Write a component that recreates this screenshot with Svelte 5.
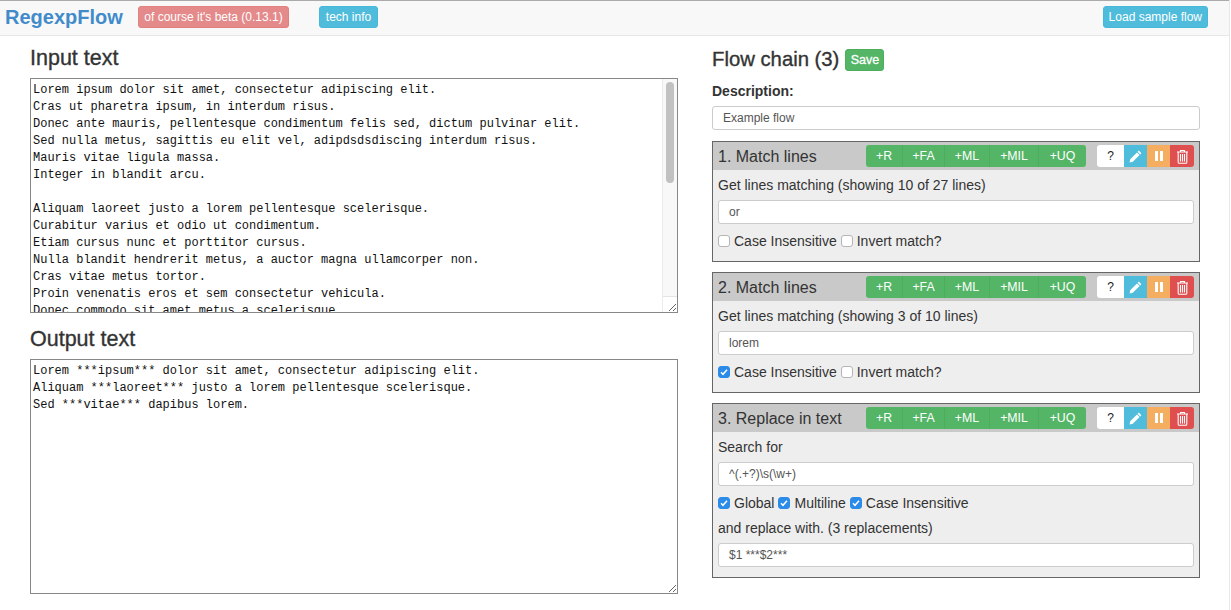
<script>
  const input = `Lorem ipsum dolor sit amet, consectetur adipiscing elit.
Cras ut pharetra ipsum, in interdum risus.
Donec ante mauris, pellentesque condimentum felis sed, dictum pulvinar elit.
Sed nulla metus, sagittis eu elit vel, adipdsdsdiscing interdum risus.
Mauris vitae ligula massa.
Integer in blandit arcu.

Aliquam laoreet justo a lorem pellentesque scelerisque.
Curabitur varius et odio ut condimentum.
Etiam cursus nunc et porttitor cursus.
Nulla blandit hendrerit metus, a auctor magna ullamcorper non.
Cras vitae metus tortor.
Proin venenatis eros et sem consectetur vehicula.
Donec commodo sit amet metus a scelerisque.
Sed vitae dapibus lorem.
Nam at tellus in sem rhoncus porta.
Vivamus euismod nisl eget sem ornare.
Morbi feugiat dolor at nisi dictum.
Quisque at nulla vel lorem aliquet.
Aenean sit amet sapien et metus.
Fusce a lorem sed massa tempus.
Ut vitae odio in nunc cursus.
Duis at sem non lorem dictum.
Mauris sit amet nibh ut ipsum.
Curabitur non metus at sem.
Nullam at nisi vitae lorem.
Donec at arcu sit amet nulla.`;
  const output = `Lorem ***ipsum*** dolor sit amet, consectetur adipiscing elit.
Aliquam ***laoreet*** justo a lorem pellentesque scelerisque.
Sed ***vitae*** dapibus lorem.`;
  const adds = ['+R', '+FA', '+ML', '+MIL', '+UQ'];
</script>

{#snippet head(title)}
  <div class="filter-head">
    <span class="filter-title">{title}</span>
    <div class="btn-group adds">
      {#each adds as a}<button class="add">{a}</button>{/each}
    </div>
    <div class="btn-group tools">
      <button class="tool help">?</button>
      <button class="tool edit" aria-label="Edit">
        <svg width="13" height="13" viewBox="0 0 13 13"><path d="M9.800 .6l2.600 2.600-1.200 1.200-2.600-2.600zM8 2.400l2.600 2.600-6.800 6.800L.6 12.400l.6-3.200z" fill="#fff"/></svg>
      </button>
      <button class="tool pause" aria-label="Pause">
        <svg width="8" height="10" viewBox="0 0 8 10"><path d="M0 0h3v10H0zM5 0h3v10H5z" fill="#fff"/></svg>
      </button>
      <button class="tool del" aria-label="Delete">
        <svg width="13" height="15" viewBox="0 0 13 15"><path d="M1 3h11M4.500 3V1.500h4V3M2.200 3v10.200q0 1.100 1 1.100h6.600q1 0 1-1.100V3M4.500 5v7.500M6.500 5v7.500M8.500 5v7.500" fill="none" stroke="#fff" stroke-width="1.100"/></svg>
      </button>
    </div>
  </div>
{/snippet}

{#snippet check(label, on)}
  <label class="check"><span class="box" class:on>{#if on}<svg width="10" height="10" viewBox="0 0 10 10"><path d="M2 5.300l2 2 4-4.600" fill="none" stroke="#fff" stroke-width="1.500"/></svg>{/if}</span>{label}</label>
{/snippet}

<div class="frame">
  <nav class="nav">
    <span class="brand">RegexpFlow</span>
    <button class="btn beta">of course it's beta (0.13.1)</button>
    <button class="btn info tech">tech info</button>
    <button class="btn info load">Load sample flow</button>
  </nav>

  <main class="page">
    <section class="left">
      <h3 class="first">Input text</h3>
      <div class="ta-wrap">
        <textarea class="ta" readonly spellcheck="false" value={input}></textarea>
        <div class="sbar"><div class="track"><div class="thumb"></div></div></div>
      </div>
      <h3 class="second">Output text</h3>
      <textarea class="ta" readonly spellcheck="false" value={output}></textarea>
    </section>

    <section class="right">
      <div class="chain-head">
        <h3 class="chain-title">Flow chain (3)</h3>
        <button class="save">Save</button>
      </div>
      <div class="desc-label">Description:</div>
      <input class="field desc" value="Example flow" />

      <div class="filter">
        {@render head('1. Match lines')}
        <div class="body">
          <div class="lbl">Get lines matching (showing 10 of 27 lines)</div>
          <input class="field" value="or" />
          <div class="checks">{@render check('Case Insensitive', false)}{@render check('Invert match?', false)}</div>
        </div>
      </div>

      <div class="filter">
        {@render head('2. Match lines')}
        <div class="body">
          <div class="lbl">Get lines matching (showing 3 of 10 lines)</div>
          <input class="field" value="lorem" />
          <div class="checks">{@render check('Case Insensitive', true)}{@render check('Invert match?', false)}</div>
        </div>
      </div>

      <div class="filter">
        {@render head('3. Replace in text')}
        <div class="body">
          <div class="lbl">Search for</div>
          <input class="field" value={'^(.+?)\\s(\\w+)'} />
          <div class="checks">{@render check('Global', true)}{@render check('Multiline', true)}{@render check('Case Insensitive', true)}</div>
          <div class="lbl second-lbl">and replace with. (3 replacements)</div>
          <input class="field" value="$1 ***$2***" />
        </div>
      </div>
    </section>
  </main>
</div>

<style>
  :global(body) {
    margin: 0;
    background: #fff;
    color: #333;
    font-family: "Liberation Sans", Arial, sans-serif;
    font-size: 14px;
    overflow: hidden;
  }
  .frame {
    width: 1230px;
    height: 610px;
    box-sizing: border-box;
    border-right: 1px solid #e7e7e7;
  }
  .nav {
    display: flex;
    align-items: center;
    height: 36px;
    box-sizing: border-box;
    border-top: 1px solid #aaa;
    border-bottom: 1px solid #e7e7e7;
    background: #f8f8f8;
    padding: 0 21px 2px 5px;
  }
  .brand {
    font-size: 20px;
    font-weight: 700;
    color: #428bca;
    width: 133px;
  }
  .btn {
    height: 22px;
    padding: 0 5px;
    font: 12px "Liberation Sans", Arial, sans-serif;
    color: #fff;
    border: 1px solid;
    border-radius: 3px;
  }
  .beta { background: #e58a8a; border-color: #e28080; width: 151px; }
  .info { background: #4fbcdb; border-color: #46b8da; }
  .tech { margin-left: 30px; width: 59px; }
  .load { margin-left: auto; }

  .page {
    display: flex;
    padding-left: 30px;
    gap: 34px;
  }
  .left { width: 648px; }
  .right { width: 488px; }
  h3 {
    font-size: 20.3px;
    font-weight: 400;
    line-height: 24px;
    margin: 0;
    color: #333;
    -webkit-text-stroke: 0.35px #333;
  }
  .chain-title { margin-bottom: 2px; }
  .first, .second { font-size: 21.5px; }
  .first { margin-top: 10px; margin-bottom: 8px; }
  .second { margin-top: 14px; margin-bottom: 8px; }
  .ta-wrap { position: relative; }
  .ta {
    display: block;
    width: 648px;
    height: 235px;
    box-sizing: border-box;
    border: 1px solid #888;
    padding: 3px 2px 2px;
    margin: 0;
    resize: both;
    overflow-y: auto;
    font: 12px/17px "Liberation Mono", "Courier New", monospace;
    color: #111;
    outline: none;
    white-space: pre-wrap;
  }
  .sbar {
    position: absolute;
    top: 1px;
    right: 1px;
    bottom: 1px;
    width: 15px;
    box-sizing: border-box;
    border-left: 1px solid #ececec;
    pointer-events: none;
  }
  .track {
    height: 218px;
    box-sizing: border-box;
    padding: 3px 3px 0 3px;
    background: #f8f8f8;
    border-bottom: 1px solid #e4e4e4;
  }
  .thumb {
    width: 8px;
    height: 101px;
    background: #c1c1c1;
    border-radius: 4px;
  }
  .chain-head {
    display: flex;
    align-items: center;
    gap: 6px;
    margin-top: 13px;
    height: 22px;
  }
  .save {
    height: 22px;
    width: 39px;
    padding: 0;
    font: 12.500px "Liberation Sans", Arial, sans-serif;
    -webkit-text-stroke: 0.3px #fff;
    color: #fff;
    background: #54b567;
    border: 1px solid #4cae5c;
    border-radius: 3px;
  }
  .desc-label {
    font-weight: 700;
    font-size: 14px;
    line-height: 20px;
    margin-top: 10px;
    margin-bottom: 5px;
  }
  .field {
    display: block;
    width: 100%;
    height: 24px;
    box-sizing: border-box;
    border: 1px solid #ccc;
    border-radius: 3px;
    padding: 0 10px;
    margin: 0;
    font: 12px "Liberation Sans", Arial, sans-serif;
    color: #555;
    background: #fff;
    outline: none;
  }
  .filter {
    margin-top: 10px;
    border: 1px solid #666;
    background: #eee;
    padding-bottom: 10px;
  }
  .desc + .filter { margin-top: 11px; }
  .filter-head {
    display: flex;
    align-items: center;
    height: 28px;
    background: #c9c9c9;
    padding: 0 5px;
  }
  .filter-title {
    font-size: 16px;
    color: #333;
    width: 148px;
    padding-top: 2px;
  }
  .btn-group { display: flex; height: 22px; }
  .add {
    height: 22px;
    padding: 0;
    font: 12.300px "Liberation Sans", Arial, sans-serif;
    color: #fff;
    background: #54b567;
    border: 0;
    border-right: 1px solid #4cae5c;
  }
  .add:nth-child(1) { width: 37px; border-radius: 3px 0 0 3px; }
  .add:nth-child(2) { width: 42px; }
  .add:nth-child(3) { width: 45px; }
  .add:nth-child(4) { width: 49px; }
  .add:nth-child(5) { width: 47px; border-radius: 0 3px 3px 0; border-right: 0; }
  .tools { margin-left: 11px; }
  .tool {
    height: 22px;
    width: 23px;
    padding: 0;
    border: 0;
    display: flex;
    align-items: center;
    justify-content: center;
  }
  .help {
    width: 27px;
    background: #fff;
    color: #222;
    font: 12px "Liberation Sans", Arial, sans-serif;
    border-radius: 3px 0 0 3px;
  }
  .edit { background: #4fbcdb; }
  .pause { background: #f5ad5f; }
  .del { width: 24px; background: #df4f50; border-radius: 0 3px 3px 0; }
  .body { padding: 5px 5px 0; }
  .lbl { font-size: 14px; line-height: 20px; color: #333; }
  .body .field { margin-top: 5px; }
  .checks { display: flex; gap: 4px; margin-top: 7px; height: 20px; align-items: center; }
  .second-lbl { margin-top: 5px; }
  .check { display: inline-flex; align-items: center; gap: 4px; font-size: 14px; }
  .box {
    width: 10px;
    height: 10px;
    border: 1px solid #b5b5b5;
    border-radius: 3px;
    background: #fff;
    display: inline-flex;
  }
  .box.on { background: #2a8be8; border-color: #2a8be8; }
</style>
